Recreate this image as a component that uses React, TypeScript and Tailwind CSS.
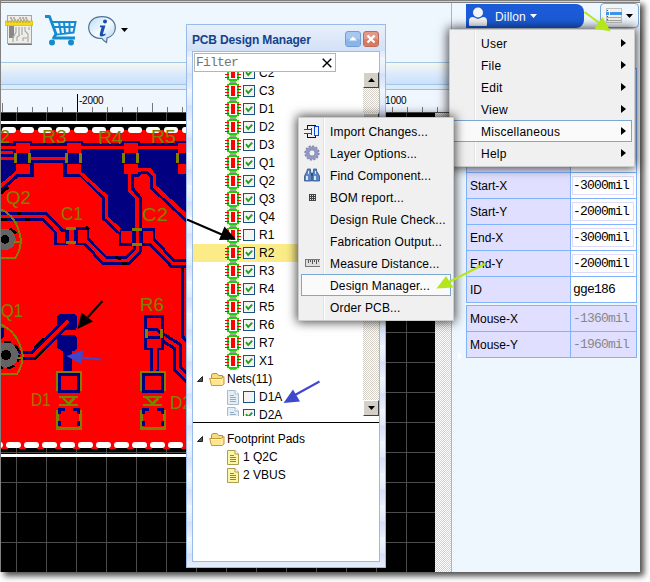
import React from "react";

const sans = "font-['Liberation_Sans',Arial,sans-serif]";
const mono = "font-['Liberation_Mono','Courier_New',monospace]";
const dither = "bg-[repeating-conic-gradient(#d4d0c8_0_25%,#ffffff_0_50%)] bg-[length:2px_2px]";

const NAVY = "#000080";
const RED = "#ff0000";
const OLIVE = "#808000";

function Chip() {
  return (
    <svg className="h-[18px] w-4 shrink-0" viewBox="0 0 16 18" shapeRendering="crispEdges">
      <rect x="2" y="0" width="12" height="18" fill="#eff8c8" />
      <path d="M5 0h6v1H5zM5 17h6v1H5z" fill="#9aa39a" />
      <path d="M4 1h8v1h2v14h-2v1H4v-1H2V2h2z" fill="#1bd010" />
      <rect x="4" y="3" width="8" height="12" fill="#fff" />
      <rect x="6" y="4" width="4" height="10" fill={RED} />
      <path d="M0 4h4v1H0zM0 7h4v1H0zM0 10h4v1H0zM0 13h4v1H0zM12 4h4v1h-4zM12 7h4v1h-4zM12 10h4v1h-4zM12 13h4v1h-4z" fill={RED} />
    </svg>
  );
}

function Check({ on }: { on: boolean }) {
  return (
    <svg className="size-3 shrink-0" viewBox="0 0 12 12">
      <rect x=".5" y=".5" width="11" height="11" fill="#f3f3f0" stroke="#1c5180" />
      {on && <path d="M3 5.2L5.2 8 9.2 3.6" fill="none" stroke="#21a121" strokeWidth="1.9" />}
    </svg>
  );
}

function Doc({ yellow }: { yellow?: boolean }) {
  return (
    <svg className="h-[15px] w-3 shrink-0" viewBox="0 0 12 15">
      <path d="M.5.5H8L11.5 4v10.500H.5z" fill={yellow ? "#fdf6a8" : "#e4eef7"} stroke={yellow ? "#a99d50" : "#a9bccb"} />
      <path d="M8 .5V4h3.500" fill="#fff" stroke={yellow ? "#a99d50" : "#a9bccb"} />
      <path d="M3 5.500h4M3 7.500h6M3 9.500h6M3 11.500h6" stroke={yellow ? "#8d8547" : "#93abc0"} />
    </svg>
  );
}

function Folder() {
  return (
    <svg className="h-[13px] w-4 shrink-0" viewBox="0 0 16 13">
      <path d="M2.500 11V1.500L4 .5h4l1.500 2h4V6" fill="#f5dc80" stroke="#b8923a" />
      <path d="M.7 5.500h11.300L15 3.500V11l-2 1.500H2.500z" fill="#ffe58f" stroke="#c59a3b" />
      <path d="M2 6.500h10l1 5" fill="none" stroke="#fff6c8" />
    </svg>
  );
}

function Expander() {
  return (
    <svg className="size-[6px] shrink-0" viewBox="0 0 6 6">
      <path d="M5.500.5v5h-5z" fill="#555" stroke="#222" />
    </svg>
  );
}

const parts = ["C2", "C3", "D1", "D2", "D3", "Q1", "Q2", "Q3", "Q4", "R1", "R2", "R3", "R4", "R5", "R6", "R7", "X1"];

function DesignManager() {
  return (
    <div className="absolute left-[186px] top-6 flex h-[544px] w-[200px] flex-col border border-[#99bbe8] bg-[repeating-linear-gradient(#f3f7fe_0,#e0eafb_16px,#d3e1f8_17px,#e9f0fd_32px)] px-[5px] pb-[5px]">
      <div className="-mx-[5px] flex h-[26px] shrink-0 items-center gap-[2px] bg-gradient-to-b from-[#e9f0fb] to-[#d2e1f7] pl-[5px] pr-[6px] pt-px">
        <span className="grow whitespace-nowrap pt-[2px] text-[12px] font-bold tracking-[-0.15px] text-[#15428b]">PCB Design Manager</span>
        <svg className="size-4" viewBox="0 0 16 16">
          <rect x=".5" y=".5" width="15" height="15" rx="2.500" fill="#a6c8ef" stroke="#6f9ed4" />
          <rect x="1" y="8" width="14" height="7" rx="2" fill="#8bb5e8" />
          <path d="M4 9.500L8 5.500l4 4z" fill="#fff" />
        </svg>
        <svg className="size-4" viewBox="0 0 16 16">
          <rect x=".5" y=".5" width="15" height="15" rx="2.500" fill="#e29a88" stroke="#bd6a58" />
          <rect x="1" y="8" width="14" height="7" rx="2" fill="#d87a62" />
          <path d="M4.500 4.500l7 7M11.500 4.500l-7 7" stroke="#fff" strokeWidth="2.400" />
        </svg>
      </div>
      <div className="flex grow flex-col overflow-hidden border border-[#99bbe8] bg-white">
        <div className="ml-px mt-px flex h-[19px] w-[142px] shrink-0 items-center justify-between border border-[#b5b5b5] pl-px pr-[3px]">
          <span className={`${mono} text-[13px] leading-none tracking-[-0.8px] text-[#757575]`}>Filter</span>
          <svg className="size-[10px]" viewBox="0 0 10 10">
            <path d="M.7.7l8.600 8.600M9.300.7L.7 9.300" stroke="#000" strokeWidth="1.400" />
          </svg>
        </div>
        <div className="flex h-[346px] shrink-0">
          <div className="h-[349px] w-[170px] overflow-hidden">
            <div className="-mt-2">
              {parts.map((p) => (
                <div key={p} className={`flex h-[18px] items-center pl-8 ${p === "R2" ? "bg-[#fbec88]" : ""}`}>
                  <Chip />
                  <span className="ml-[2px] flex"><Check on={p !== "R1"} /></span>
                  <span className="ml-1">{p}</span>
                </div>
              ))}
              <div className="flex h-[18px] items-center pl-1">
                <Expander />
                <span className="ml-[6px]"><Folder /></span>
                <span className="ml-[2px]">Nets(11)</span>
              </div>
              <div className="flex h-[18px] items-center pl-[34px]">
                <Doc />
                <span className="ml-1"><Check on={false} /></span>
                <span className="ml-1">D1A</span>
              </div>
              <div className="flex h-[18px] items-start pl-[34px]">
                <span className="flex h-[10px] items-start gap-1 overflow-hidden pt-px">
                  <Doc />
                  <span className="pt-[2px]"><Check on /></span>
                </span>
                <span className="ml-1 mt-[3px] leading-none">D2A</span>
              </div>
            </div>
          </div>
          <div className={`flex h-[344px] w-4 flex-col justify-between ${dither}`}>
            <ScrollButton />
            <div className="mb-auto mt-[25px] h-[150px] border border-b-[#404040] border-l-white border-r-[#404040] border-t-white bg-[#d4d0c8]" />
            <ScrollButton down />
          </div>
        </div>
        <div className="mt-1 h-px w-[186px] shrink-0 bg-black" />
        <div className="mt-[7px]">
          <div className="flex h-[18px] items-center pl-1">
            <Expander />
            <span className="ml-[6px]"><Folder /></span>
            <span className="ml-[2px]">Footprint Pads</span>
          </div>
          {["1 Q2C", "2 VBUS"].map((t) => (
            <div key={t} className="flex h-[18px] items-center gap-1 pl-[34px]">
              <Doc yellow />
              <span>{t}</span>
            </div>
          ))}
        </div>
      </div>
    </div>
  );
}

function ScrollButton({ down }: { down?: boolean }) {
  return (
    <div className="flex size-4 shrink-0 items-center justify-center border border-b-[#404040] border-l-white border-r-[#404040] border-t-white bg-[#d4d0c8]">
      <svg className="h-1 w-[7px]" viewBox="0 0 7 4">
        <path d={down ? "M0 0h7L3.500 4z" : "M0 4h7L3.500 0z"} fill="#000" />
      </svg>
    </div>
  );
}

function SubIcon({ name }: { name: string }) {
  if (name === "import")
    return (
      <svg className="h-[15px] w-4" viewBox="0 0 16 15" fill="none" shapeRendering="crispEdges">
        <path d="M3.500 5V1.500h8V3M3.500 10v3.500h8V12" stroke="#111" />
        <path d="M0 5.500h8M0 9.500h8M7.500 4v7" stroke="#1447d6" />
        <path d="M10.500 2.500h4v9h-4z" stroke="#1447d6" />
      </svg>
    );
  if (name === "gear")
    return (
      <svg className="size-4" viewBox="0 0 16 16" fill="none">
        <circle cx="8" cy="8" r="6.600" stroke="#7c80a6" strokeWidth="2" strokeDasharray="2.100 1.350" />
        <circle cx="8" cy="8" r="4.900" stroke="#9297c6" strokeWidth="3.400" />
        <circle cx="8" cy="8" r="3.100" stroke="#686c92" strokeWidth=".7" />
      </svg>
    );
  if (name === "find")
    return (
      <svg className="h-[14px] w-4" viewBox="0 0 16 14">
        <path d="M3.500 1h3v2L7.500 6v7H.5V8L3 3zM9.500 1h3v2L15.500 8v5h-7V6l1-3z" fill="#5d87c4" stroke="#294f8b" strokeWidth=".8" />
        <path d="M2 8h2v4H2zM10 8h2v4h-2zM4 3h1v3H4zM11 3h1v3h-1z" fill="#d5e4f7" />
        <path d="M7 5h2v3H7z" fill="#294f8b" />
      </svg>
    );
  if (name === "bom")
    return (
      <svg className="size-[7px]" viewBox="0 0 7 7" shapeRendering="crispEdges">
        <rect width="7" height="7" fill="#444" />
        <path d="M1 1h1v1H1zM3 1h1v1H3zM5 1h1v1H5zM1 3h1v1H1zM3 3h1v1H3zM5 3h1v1H5zM1 5h1v1H1zM3 5h1v1H3zM5 5h1v1H5z" fill="#ddd" />
      </svg>
    );
  if (name === "measure")
    return (
      <svg className="h-2 w-[15px]" viewBox="0 0 15 8" shapeRendering="crispEdges">
        <rect width="15" height="8" fill="#777" />
        <rect x="1" y="1" width="14" height="6" fill="#ddd" />
        <path d="M3 1h1v3H3zM5 1h1v2H5zM7 1h1v4H7zM9 1h1v2H9zM11 1h1v4h-1zM13 1h1v2h-1z" fill="#555" />
      </svg>
    );
  return null;
}

const subItems: [string, string][] = [
  ["Import Changes...", "import"],
  ["Layer Options...", "gear"],
  ["Find Component...", "find"],
  ["BOM report...", "bom"],
  ["Design Rule Check...", ""],
  ["Fabrication Output...", ""],
  ["Measure Distance...", "measure"],
  ["Design Manager...", ""],
  ["Order PCB...", ""],
];

function Menus() {
  return (
    <>
      <div className="absolute left-[449px] top-[29px] flex h-[138px] w-[186px] flex-col border border-[#ccc] bg-[linear-gradient(90deg,#f0f0f0_24px,#e2e2e2_24px_25px,#fff_25px_26px,#f0f0f0_26px)] px-[2px] py-[2px] shadow-[0_0_10px_1px_rgba(0,0,0,0.75)]">
        {["User", "File", "Edit", "View", "Miscellaneous", "Help"].map((t) => (
          <div
            key={t}
            className={`flex h-[22px] shrink-0 items-center justify-between border pl-[28px] pr-[5px] text-[12px] tracking-[0.25px] ${t === "Miscellaneous" ? "border-[#7aa8d0] bg-[#fafafa]" : "border-transparent"}`}
          >
            <span className="pt-px">{t}</span>
            <svg className="h-2 w-[5px]" viewBox="0 0 5 8"><path d="M0 0l5 4-5 4z" fill="#000" /></svg>
          </div>
        ))}
      </div>
      <div className="absolute left-[298px] top-[117px] flex h-[204px] w-[156px] flex-col border border-[#ccc] bg-[linear-gradient(90deg,#f0f0f0_24px,#e2e2e2_24px_25px,#fff_25px_26px,#f0f0f0_26px)] px-[2px] py-[2px] shadow-[0_0_10px_1px_rgba(0,0,0,0.75)]">
        {subItems.map(([t, icon]) => (
          <div
            key={t}
            className={`flex h-[22px] shrink-0 items-center whitespace-nowrap border text-[12px] tracking-[0.15px] ${t === "Design Manager..." ? "border-[#7aa8d0] bg-[#fafafa]" : "border-transparent"}`}
          >
            <span className="ml-[2px] flex w-4 shrink-0 justify-center"><SubIcon name={icon} /></span>
            <span className="ml-[10px] pt-[2px]">{t}</span>
          </div>
        ))}
      </div>
    </>
  );
}

function Toolbar() {
  return (
    <div className="flex h-[59px] shrink-0 items-start bg-[#eef6fe] pl-1 pt-3">
      <svg className="h-[30px] w-7" viewBox="0 0 28 30">
        <rect x="2.500" y=".5" width="24" height="28" fill="#eeede8" stroke="#a5a5a0" />
        <path d="M5 3h6M14 3h8M6 5h18" stroke="#777" strokeDasharray="2 1" />
        <rect x="4" y="11" width="5" height="12" fill="#888" />
        <path d="M11 12v5l-3 6v4M14 12v8M17 12v8M20 12v4l3 3v8M12 26v-4l3-2M24 12v3M18 26v-3h4" stroke="#aaa" fill="none" strokeWidth="1.200" />
        <rect x="0" y="6" width="28" height="4.500" fill="#f4d91c" stroke="#bba413" strokeWidth=".5" />
        <path d="M3 6v2M6 6v2M9 6v2M12 6v2M15 6v2M18 6v2M21 6v2M24 6v2" stroke="#9c8813" strokeWidth=".7" />
        <path d="M3 29.500h24" stroke="#777" />
      </svg>
      <svg className="ml-3 h-[31px] w-8" viewBox="0 0 32 31" fill="none" stroke="#168bce">
        <path d="M0 1.500h4.500L11 19 8.500 23H30" strokeWidth="2.800" strokeLinejoin="round" />
        <path d="M7 7h23.500l-2 10.500L11 19.500M14 7l2 12M19 7l1 11.500M24.500 7v11M8 12h21" strokeWidth="2" />
        <circle cx="7" cy="27.500" r="3" fill="#168bce" stroke="none" />
        <circle cx="26" cy="27.500" r="3" fill="#168bce" stroke="none" />
      </svg>
      <svg className="ml-[11px] mt-px h-7 w-7" viewBox="0 0 28 28">
        <defs>
          <linearGradient id="bubble" x1="0" x2="1" y1="0" y2="1">
            <stop offset="0" stopColor="#b9dcf6" /><stop offset=".5" stopColor="#f5fbff" /><stop offset="1" stopColor="#a7d3f3" />
          </linearGradient>
        </defs>
        <path d="M14 .7c8 0 13.300 4.500 13.300 11 0 5-3.500 9-8.300 10.300 0 2-.5 3.500-.5 4.500-2-1-3.500-2.500-4.500-4C6 22.500.7 18 .7 11.700.7 5 6 .7 14 .7z" fill="url(#bubble)" stroke="#50708f" strokeWidth="1.200" />
        <circle cx="17" cy="5.500" r="2" fill="#174fae" />
        <path d="M12 9.500h5.500L15 17.500q-.3 1.500 2.500 0v1.500q-3 2-5 1.200-1.200-.7-.6-2.700l1.700-6.300H12z" fill="#174fae" />
      </svg>
      <svg className="ml-[5px] mt-[13px] h-1 w-[7px]" viewBox="0 0 7 4"><path d="M0 0h7L3.500 4z" fill="#000" /></svg>
    </div>
  );
}

function Ruler() {
  const ticks = Array.from({ length: 30 }, (_, i) => i * 15 + 1);
  return (
    <svg className={`h-[23px] w-[450px] shrink-0 bg-[#f0f6fd] ${sans}`} viewBox="1 90 450 23" shapeRendering="crispEdges">
      {ticks.map((x, i) => {
        const top = i % 20 === 5 ? 94 : i % 5 === 0 ? 103 : 107;
        return <rect key={x} x={x + 1} y={top} width="1" height={112 - top} fill={top === 94 ? "#000" : "#777"} />;
      })}
      <rect x="1" y="112" width="450" height="1" fill="#555" />
      <text x="79" y="104" fontSize="10" letterSpacing="-.25">-2000</text>
      <text x="382" y="104" fontSize="10" letterSpacing="-.25">-1000</text>
    </svg>
  );
}

function Trace({ d, w = 27, r = 10 }: { d: string; w?: number; r?: number }) {
  return (
    <g fill="none">
      <path d={d} stroke={NAVY} strokeWidth={w} />
      <path d={d} stroke={RED} strokeWidth={r} />
    </g>
  );
}

function Board() {
  const cols = Array.from({ length: 15 }, (_, i) => 16 + i * 30);
  const rows = Array.from({ length: 15 }, (_, i) => 122 + i * 30);
  const dashes = Array.from({ length: 11 }, (_, i) => i);
  return (
    <svg className={`h-full w-[434px] shrink-0 bg-black ${sans}`} viewBox="1 113 434 459" shapeRendering="crispEdges">
      {cols.map((x) => <rect key={x} x={x} y="113" width="1" height="459" fill="#4c4c4c" />)}
      {rows.map((y) => <rect key={y} x="1" y={y} width="434" height="1" fill="#4c4c4c" />)}
      <rect x="1" y="121" width="200" height="3" fill="#fff" />
      <rect x="1" y="124" width="200" height="7" fill="#000" />
      <rect x="1" y="130" width="200" height="318" fill={RED} />
      <rect x="1" y="454" width="200" height="3" fill="#fff" />
      {dashes.map((i) => <rect key={i} x={2 + i * 18} y="127" width="14" height="6" rx="3" fill="#fff" shapeRendering="auto" />)}
      {dashes.map((i) => <rect key={i} x={-12 + i * 18} y="442" width="15" height="6" rx="3" fill="#fff" shapeRendering="auto" />)}
      <path d="M1 448.500h190" stroke={RED} strokeDasharray="7 11" />

      <g transform="translate(0 115) scale(.333333)">
        <path d="M0 85H40V77H95V85H193V77H250V85H365V77H421V85H526V77H570V300L560 295 462 205V172L450 158H425V245L428 345H362L320 305V245L243 182H193V143H97V182H50L0 230V122H0z" fill={NAVY} />
        <path d="M0 97H570M0 112H40" stroke={RED} strokeWidth="9" />
        <path d="M0 131H200L215 148" stroke={RED} strokeWidth="10" fill="none" />
        <path d="M97 143H193V182H243L315 250V310L362 352V560H0V230L50 182H97z" fill={RED} />
        <path d="M415 178H440L455 218 570 320V440H430L425 250 400 220V178z" fill={RED} />
        <Trace d="M0 215L65 160" />
        <path d="M97 140V182H50L0 230" stroke={NAVY} strokeWidth="8" fill="none" />
        <path d="M97 140H193V182H243L311 249V311L362 358V390H400" stroke={NAVY} strokeWidth="9" fill="none" />
        <path d="M235 168L320 245V307L365 350" stroke={RED} strokeWidth="10" fill="none" />
        <path d="M404 165H450L462 180V215L575 320" stroke={RED} strokeWidth="10" fill="none" />
        <path d="M401 182H414L424 173H442L454 185V219L575 332" stroke={NAVY} strokeWidth="8" fill="none" />
        <path d="M399 178V222L421 248V410" stroke={NAVY} strokeWidth="9" fill="none" />
        <path d="M390 170V228L411 250V400" stroke={RED} strokeWidth="9" fill="none" />
        <Trace d="M0 305H133L180 352" />
        <path d="M250 370L314 437H382L413 405V340" stroke={NAVY} strokeWidth="27" fill="none" />
        <path d="M250 370L314 437H382L413 405V250" stroke={RED} strokeWidth="10" fill="none" />
        <Trace d="M450 375L518 445H570" />
        <path d="M548 450V560" stroke={NAVY} strokeWidth="9" />
        <path d="M167 347H200V387H167zM230 340H264V387H230z" fill={RED} stroke={NAVY} strokeWidth="8" />
        <path d="M364 347H398V388H364zM428 343H462V388H428z" fill={RED} stroke={NAVY} strokeWidth="8" />
        <path d="M172 352H196V382H172zM235 352H258V382H235zM362 347H396V384H362zM430 348H457V384H430z" fill={RED} />
        <path d="M250 370L318 437M160 335L185 358M450 375L475 401" stroke={RED} strokeWidth="10" />
        <path d="M204 345V382M226 345V382M401 345V386M423 345V386" stroke={NAVY} strokeWidth="8" />
        <path d="M199 340H228M199 382H228M396 343H426M396 388H426" stroke={OLIVE} strokeWidth="9" />
        {[48, 202, 372, 534].map((x) => (
          <g key={x}>
            <rect x={x} y="84" width="42" height="30" fill={RED} />
            <rect x={x} y="114" width="42" height="34" fill={NAVY} />
            <rect x={x} y="148" width="42" height="30" fill={RED} />
            <path d={`M${x - 1} 115V144M${x + 41} 115V144`} stroke={OLIVE} strokeWidth="9" />
          </g>
        ))}
        <path d="M0 315H20M50 296H63M75 314H90M258 334L268 344M345 428L362 430M365 446L382 446M3 234L25 216M548 458V467" stroke="#000" strokeWidth="9" />
        <circle cx="15" cy="373" r="32" fill="#646464" />
        <circle cx="15" cy="373" r="13" fill="#000" />
        <path d="M30 340L48 355" stroke="#000" strokeWidth="8" />
        <path d="M0 283Q50 300 62 370Q64 405 45 430H0M42 382H62" stroke={OLIVE} strokeWidth="6" fill="none" />
      </g>

      <g transform="translate(0 285) scale(.333333)">
        <path d="M548 0V155L575 185" stroke={NAVY} strokeWidth="9" fill="none" />
        <path d="M0 128H12V155L0 168z" fill={NAVY} />
        <Trace d="M50 211H102L200 112" />
        <path d="M178 87H224L232 95V127L226 135H185L171 120V95z" fill={NAVY} />
        <path d="M180 151H224L232 158V190L224 198H215V260H190V198H185L171 187V160z" fill={NAVY} />
        <path d="M165 148L205 108" stroke={RED} strokeWidth="10" />
        <path d="M103 188L130 160M105 222L135 190" stroke="#000" strokeWidth="7" />
        <circle cx="18" cy="210" r="38" fill="#646464" />
        <circle cx="18" cy="210" r="40" fill="none" stroke="#000" strokeWidth="7" strokeDasharray="22 14" />
        <circle cx="18" cy="210" r="15" fill="#000" />
        <path d="M0 118Q55 140 68 210Q68 245 50 268H0M50 219H70" stroke={OLIVE} strokeWidth="6" fill="none" />
        <Trace d="M464 142L533 185V252L575 292" w={28} r={10} />
        <path d="M436 95H488V192H474V260H454V192H436z" fill={RED} stroke={NAVY} strokeWidth="8" />
        <path d="M464 192V262" stroke={RED} strokeWidth="10" />
        <path d="M440 133H470L483 146M440 157H480" stroke={NAVY} strokeWidth="8" fill="none" />
        <path d="M439 132V160M484 132V160" stroke={OLIVE} strokeWidth="9" />
        {[168, 420].map((x) => (
          <g key={x} fill="none">
            <path d={`M${x + 4} 318V262H${x + 73}V318M${x + 4} 374V430H${x + 73}V374`} stroke={OLIVE} strokeWidth="8" />
            <path d={`M${x + 10} 269H${x + 68}V319H${x + 10}z`} stroke={NAVY} strokeWidth="8" />
            <path d={`M${x + 10} 388V374H${x + 28}M${x + 52} 374H${x + 68}V388M${x + 10} 408V424M${x + 68} 408V424`} stroke={NAVY} strokeWidth="8" />
            <path d={`M${x + 10} 336H${x + 66}M${x + 10} 360H${x + 66}M${x + 20} 338L${x + 38} 357 ${x + 56} 338`} stroke={OLIVE} strokeWidth="7" />
          </g>
        ))}
      </g>

      <g fill={OLIVE} fontSize="18" fontWeight="400">
        <text x="0" y="143">2</text>
        <text x="42" y="143" textLength="25" lengthAdjust="spacingAndGlyphs">R3</text>
        <text x="98" y="144" textLength="25" lengthAdjust="spacingAndGlyphs">R4</text>
        <text x="151" y="143" textLength="25" lengthAdjust="spacingAndGlyphs">R5</text>
        <text x="6" y="204" textLength="25" lengthAdjust="spacingAndGlyphs">Q2</text>
        <text x="61" y="220" textLength="22" lengthAdjust="spacingAndGlyphs">C1</text>
        <text x="142" y="221" textLength="26" lengthAdjust="spacingAndGlyphs">C2</text>
        <text x="1" y="317" textLength="22" lengthAdjust="spacingAndGlyphs">Q1</text>
        <text x="140" y="311" textLength="24" lengthAdjust="spacingAndGlyphs">R6</text>
        <text x="31" y="406" textLength="20" lengthAdjust="spacingAndGlyphs">D1</text>
        <text x="170" y="409" textLength="22" lengthAdjust="spacingAndGlyphs">D2</text>
      </g>
    </svg>
  );
}

function PropertyRow({ label, value, box, muted }: { label: string; value: string; box?: boolean; muted?: boolean }) {
  return (
    <div className="flex h-[26px] border-b border-[#80b3fb]">
      <div className="flex w-[103px] shrink-0 items-center bg-[#e0dfff] pl-[3px]">{label}</div>
      <div className={`flex grow items-center border-l border-[#80b3fb] px-px ${muted ? "bg-[#e0dfff]" : "bg-white"}`}>
        <span className={`${mono} flex h-[19px] w-[62px] items-center whitespace-nowrap border text-[13px] leading-none tracking-[-0.8px] ${box ? "border-[#dddafa]" : "border-transparent"} ${muted ? "text-[#888]" : "text-black"}`}>
          {value}
        </span>
      </div>
    </div>
  );
}

function Properties() {
  return (
    <div className="flex w-[189px] shrink-0 flex-col border-l border-[#9eb7d6] bg-[#eef6fe]">
      <div className="flex h-[26px] items-start pl-[14px]">
        <div className="mt-px flex h-6 w-[118px] items-center rounded-r-lg bg-[#1b5bd8] pl-[3px] text-white">
          <svg className="h-[19px] w-[18px]" viewBox="0 0 18 19" fill="#f4f4f2">
            <circle cx="9" cy="5.500" r="5" />
            <path d="M0 18v-4q0-4 4-4l5 2 5-2q4 0 4 4v4q0 1-1 1H1q-1 0-1-1z" />
          </svg>
          <span className="ml-2 pt-px tracking-[0.15px]">Dillon</span>
          <svg className="ml-1 h-1 w-[7px]" viewBox="0 0 7 4"><path d="M0 0h7L3.500 4z" fill="#fff" /></svg>
        </div>
        <div className="ml-4 flex h-[25px] w-[39px] items-center rounded border border-[#7aa7d2] bg-[#f0f6fd] pl-[5px]">
          <svg className="h-[15px] w-4" viewBox="0 0 16 15" shapeRendering="crispEdges">
            <rect x=".5" y=".5" width="15" height="14" fill="#f0f0ed" stroke="#c1c1bd" />
            <rect y="4" width="16" height="3" fill="#4093e8" />
            <path d="M3 1v13" stroke="#fff" />
            <path d="M1 9.500h14M1 12.500h14" stroke="#aaa" />
            <path d="M1 2h1v1H1zM1 8h1v1H1zM1 11h1v1H1z" fill="#555" />
          </svg>
          <svg className="ml-1 h-1 w-[7px]" viewBox="0 0 7 4"><path d="M0 0h7L3.500 4z" fill="#000" /></svg>
        </div>
      </div>
      <div className="ml-[14px] mt-[39px] w-[171px] border border-b-0 border-[#80b3fb]">
        <div className="h-[104px] border-b border-[#80b3fb] bg-[linear-gradient(90deg,#e0dfff_103px,#80b3fb_103px_104px,#fff_104px)]" />
        <PropertyRow label="Start-X" value="-3000mil" box />
        <PropertyRow label="Start-Y" value="-2000mil" box />
        <PropertyRow label="End-X" value="-3000mil" box />
        <PropertyRow label="End-Y" value="-2000mil" box />
        <PropertyRow label="ID" value="gge186" />
      </div>
      <div className="ml-[14px] mt-[2px] w-[171px] border border-b-0 border-[#80b3fb]">
        <PropertyRow label="Mouse-X" value="-1360mil" muted />
        <PropertyRow label="Mouse-Y" value="-1960mil" muted />
      </div>
      <svg className="-mt-[6px] ml-[6px] h-2 w-1" viewBox="0 0 4 8"><path d="M0 0l4 4-4 4z" fill="#fff" /></svg>
    </div>
  );
}

function Arrow({ line, head, color }: { line: string; head: string; color: string }) {
  return (
    <g>
      <path d={line} stroke={color} strokeWidth="2" />
      <path d={head} fill={color} />
    </g>
  );
}

export default function App() {
  return (
    <div className={`relative h-[582px] w-[650px] overflow-hidden bg-white text-[12px] leading-none text-black ${sans}`}>
      <div className="flex h-[572px] w-[640px] flex-col border-l border-t border-[#808080] shadow-[4px_4px_6px_rgba(0,0,0,0.7)]">
        <div className="h-[2px] shrink-0 border-b border-[#808080] bg-[#d4d0c8]" />
        <div className="flex min-h-0 grow">
          <div className="flex w-[450px] shrink-0 flex-col">
            <Toolbar />
            <div className="h-[23px] shrink-0 border-y border-[#a3c6e2] bg-gradient-to-b from-[#f6f8f0] via-[#dcebfb] to-[#c9e0fc]" />
            <div className="h-[5px] shrink-0 border-b border-[#9cbfe2] bg-[#dcebfc]" />
            <Ruler />
            <div className="flex min-h-0 grow">
              <Board />
              <div className={`w-4 ${dither}`} />
            </div>
          </div>
          <Properties />
        </div>
      </div>
      <DesignManager />
      <Menus />
      <svg className="pointer-events-none absolute left-0 top-0 h-[582px] w-[650px]" viewBox="0 0 650 582">
        <Arrow color="#000" line="M187 219.500L223 235" head="M236 239.500L219 240 224.500 226.500z" />
        <Arrow color="#000" line="M102.500 301L88 317" head="M77.500 329L93 321.500 81.500 312.500z" />
        <Arrow color="#3f48cc" line="M101 359.500L81 357.500" head="M66.500 356L83.500 350 81 364z" />
        <Arrow color="#3f48cc" line="M319.500 381.500L295 395" head="M283.500 403L293 389.500 300 401.500z" />
        <Arrow color="#b5e61d" line="M584.500 12L600 23.500" head="M610.500 31.500L594.500 28.500 602.500 17z" />
        <Arrow color="#b5e61d" line="M485.500 263.500L449 282" head="M436.500 288.500L446 276 453.500 287.500z" />
      </svg>
    </div>
  );
}
